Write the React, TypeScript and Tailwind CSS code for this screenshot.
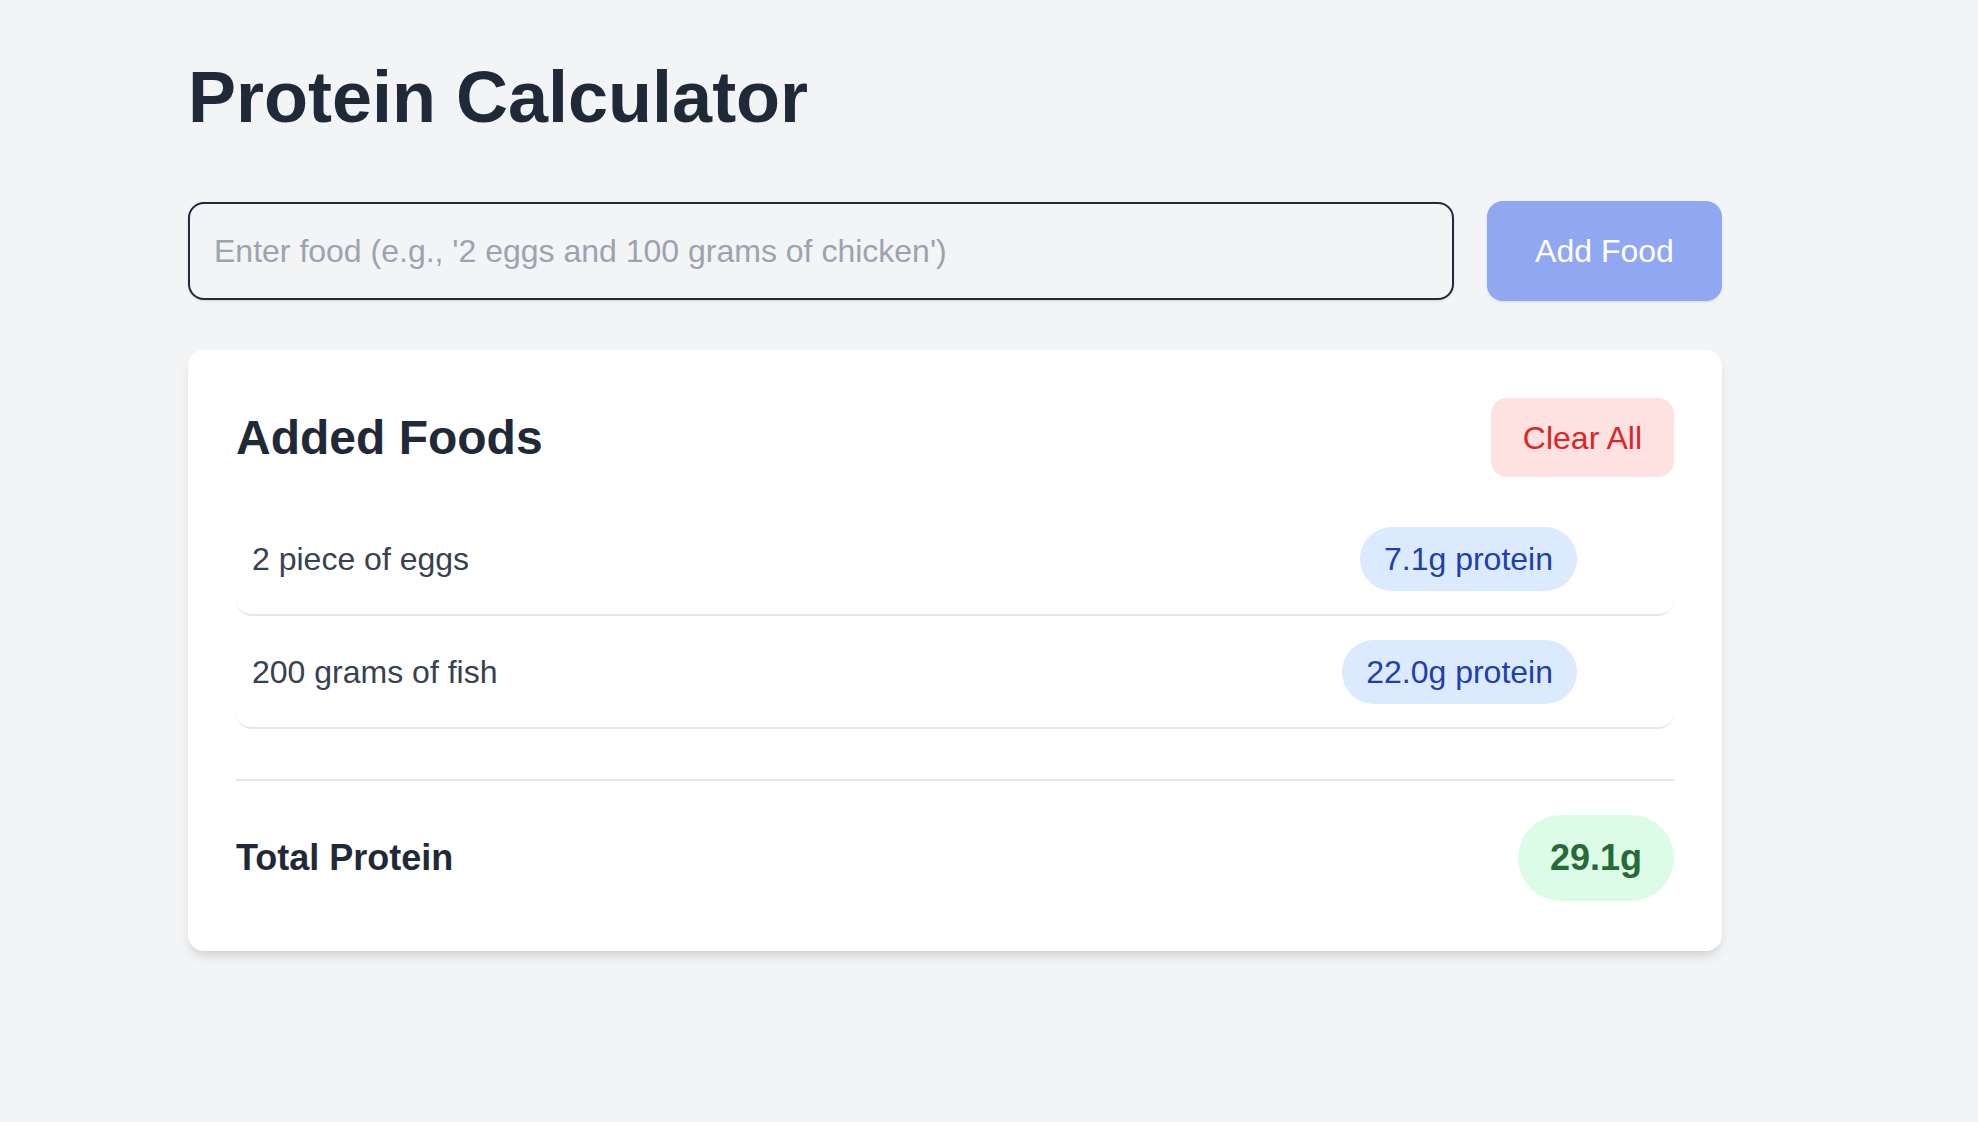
const foods = [
  { name: "2 piece of eggs", protein: 7.1 },
  { name: "200 grams of fish", protein: 22.0 },
];

function FoodRow({ name, protein }: { name: string; protein: number }) {
  return (
    <li className="flex h-[113px] items-center justify-between rounded-2xl border-b-2 border-[#e5e7eb] px-4">
      <span className="text-[32px] leading-[48px] text-[#374151]">{name}</span>
      <span className="mr-[81px] rounded-full bg-[#dbeafe] px-6 py-2 text-[32px] leading-[48px] text-[#1e40af]">
        {protein.toFixed(1)}g protein
      </span>
    </li>
  );
}

export default function App() {
  const total = foods.reduce((sum, f) => sum + f.protein, 0);

  return (
    <div className="min-h-screen bg-[#f3f4f6] font-['Liberation_Sans',Arial,sans-serif]">
      <div className="w-[1534px] pl-[188px] pt-[57px] box-content">
        <h1 className="mb-[64px] text-[72px] font-bold leading-[80px] text-[#1f2937]">Protein Calculator</h1>

        <div className="flex items-center gap-[33px]">
          <input
            type="text"
            placeholder="Enter food (e.g., '2 eggs and 100 grams of chicken')"
            className="h-[98px] flex-1 rounded-2xl border-2 border-[#1f2937] bg-[#f3f4f6] px-[24px] text-[32px] text-[#1f2937] shadow-sm outline-none placeholder:text-[#9ca3af]"
          />
          <button className="h-[100px] w-[235px] rounded-2xl bg-[#90a8f2] text-[32px] text-white shadow-sm">
            Add Food
          </button>
        </div>

        <div className="mt-[49px] rounded-2xl bg-white px-[48px] pb-[50px] pt-[48px] shadow-[0_8px_12px_-2px_rgba(0,0,0,0.1),0_4px_8px_-4px_rgba(0,0,0,0.08)]">
          <div className="flex items-center justify-between">
            <h2 className="text-[48px] font-bold leading-[64px] text-[#1f2937]">Added Foods</h2>
            <button className="h-[79px] rounded-2xl bg-[#fee2e2] px-8 text-[32px] leading-[48px] text-[#dc2626]">
              Clear All
            </button>
          </div>

          <ul className="mt-[26px]">
            {foods.map((f) => (
              <FoodRow key={f.name} name={f.name} protein={f.protein} />
            ))}
          </ul>

          <div className="mt-[50px] flex items-center justify-between border-t-2 border-[#e5e7eb] pt-[34px]">
            <span className="text-[36px] font-bold leading-[56px] text-[#1f2937]">Total Protein</span>
            <span className="rounded-full bg-[#dcfce7] px-8 py-[15px] text-[36px] font-bold leading-[56px] text-[#276a36]">
              {total.toFixed(1)}g
            </span>
          </div>
        </div>
      </div>
    </div>
  );
}
